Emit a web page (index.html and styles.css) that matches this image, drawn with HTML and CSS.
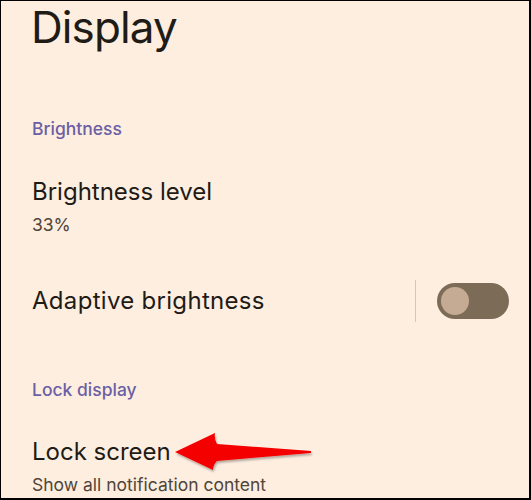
FILE: index.html
```html
<!DOCTYPE html>
<html lang="en">
<head>
  <meta charset="UTF-8" />
  <meta name="viewport" content="width=device-width, initial-scale=1.0" />
  <title>Display</title>
  <link rel="stylesheet" href="styles.css">
</head>
<body>
  <div class="screen">
    <h1 class="title">Display</h1>

    <div class="category first">Brightness</div>

    <div class="pref">
      <div class="pref-title">Brightness level</div>
      <div class="pref-summary">33%</div>
    </div>

    <div class="pref switch-pref">
      <div class="pref-title">Adaptive brightness</div>
      <div class="divider"></div>
      <div class="toggle"><span class="thumb"></span></div>
    </div>

    <div class="category">Lock display</div>

    <div class="pref lock-pref">
      <div class="pref-title">Lock screen</div>
      <div class="pref-summary">Show all notification content</div>

      <!-- callout arrow pointing at the item -->
      <svg class="arrow" width="142" height="44" viewBox="0 0 142 44">
        <defs>
          <filter id="shadow" x="-10%" y="-20%" width="120%" height="150%">
            <feDropShadow dx="1" dy="2" stdDeviation="1.2" flood-color="#000" flood-opacity="0.3" />
          </filter>
        </defs>
        <path d="M3 22 L43 3 Q42 9 45 14 L139 21 L139 23 L45 31 Q41 35 41 40 Z" fill="#f50000" filter="url(#shadow)" />
      </svg>
    </div>
  </div>
</body>
</html>
```

FILE: styles.css
```css
html, body {
  margin: 0;
  padding: 0;
}

body {
  font-family: Inter, "Noto Sans", sans-serif;
  background: #fdeee0;
  color: #1f1b16;
}

.screen {
  box-sizing: border-box;
  width: 531px;
  height: 500px;
  overflow: hidden;
  border: 1px solid #000;
  border-right-width: 2px;
  border-bottom-width: 2px;
  background: #fdeee0;
}

.title {
  margin: 0;
  padding: 0 30px;
  font-size: 44px;
  font-weight: 400;
  line-height: 52px;
  letter-spacing: -0.9px;
}

.category {
  padding: 56px 31px 0;
  font-size: 17.5px;
  line-height: 24px;
  font-weight: 500;
  color: #6b5fa5;
}

.category.first {
  padding-top: 64px;
}

.pref {
  position: relative;
  padding: 34px 31px 0;
}

.category.first + .pref {
  padding-top: 35px;
}

.pref-title {
  font-size: 24px;
  line-height: 32px;
}

.pref-summary {
  margin-top: 5px;
  font-size: 17.5px;
  line-height: 24px;
  color: #51453a;
}

.switch-pref {
  display: flex;
  align-items: center;
  padding: 43px 20px 0 31px;
}

.switch-pref .pref-title {
  flex: 1;
  letter-spacing: 0.3px;
}

.divider {
  width: 1px;
  height: 42px;
  margin-right: 21px;
  background: #d6c5b4;
}

.toggle {
  display: flex;
  align-items: center;
  box-sizing: border-box;
  width: 72px;
  height: 36px;
  padding: 0 4px;
  border-radius: 18px;
  background: #7c6b57;
}

.thumb {
  width: 28px;
  height: 28px;
  border-radius: 50%;
  background: #c6ab94;
}

.arrow {
  position: absolute;
  left: 171px;
  top: 28px;
}
```
